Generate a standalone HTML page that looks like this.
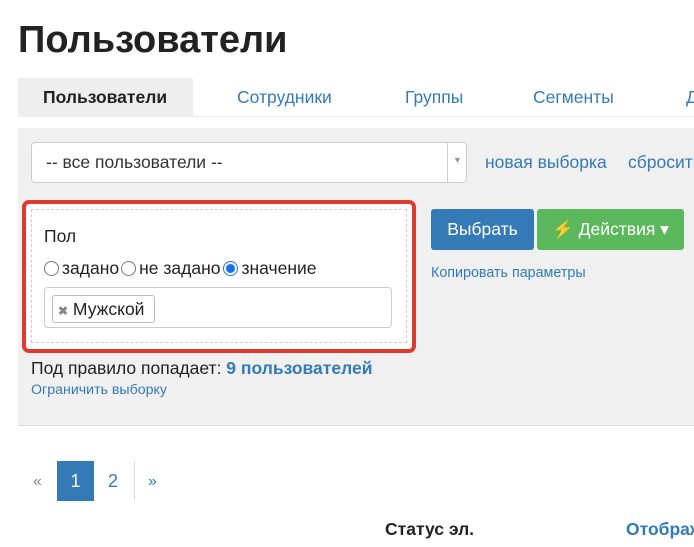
<!DOCTYPE html><html><head><meta charset="utf-8"><style>
*{box-sizing:border-box;margin:0;padding:0}
body{width:694px;height:547px;overflow:hidden;background:#fff;font-family:"Liberation Sans",sans-serif;color:#222;position:relative}
.a{position:absolute;white-space:nowrap}
.blue{color:#337ab7}
.r{width:15px;height:15px;border:1px solid #777;border-radius:50%;display:inline-block}
</style></head><body>
<div class="a" style="left:18px;top:19px;font-size:38px;font-weight:bold;color:#222">Пользователи</div>
<div class="a" style="left:18px;top:78px;width:175px;height:38px;background:#eee"></div>
<div class="a" style="left:18px;top:116px;width:676px;height:1px;background:#eee"></div>
<div class="a" style="left:43px;top:87px;font-size:17.5px;font-weight:bold">Пользователи</div>
<div class="a blue" style="left:237px;top:87px;font-size:17.5px">Сотрудники</div>
<div class="a blue" style="left:405px;top:87px;font-size:17.5px">Группы</div>
<div class="a blue" style="left:533px;top:87px;font-size:17.5px">Сегменты</div>
<div class="a blue" style="left:686px;top:87px;font-size:17.5px">Д</div>

<div class="a" style="left:18px;top:128px;width:676px;height:298px;background:#f0f0f0;border-bottom:1px solid #ddd"></div>
<div class="a" style="left:31px;top:142px;width:436px;height:41px;background:#fff;border:1px solid #ccc;border-radius:4px"></div>
<div class="a" style="left:447px;top:143px;width:1px;height:39px;background:#ccc"></div>
<div class="a" style="left:453px;top:155px;font-size:9px;color:#999">▼</div>
<div class="a" style="left:46px;top:152px;font-size:17.5px;color:#333">-- все пользователи --</div>
<div class="a blue" style="left:485px;top:152px;font-size:17.5px">новая выборка</div>
<div class="a blue" style="left:628px;top:152px;font-size:17.5px">сбросить</div>

<div class="a" style="left:22px;top:200px;width:394px;height:153px;border:4px solid #e03a2f;border-radius:7px;background:#fff"></div>
<div class="a" style="left:31px;top:209px;width:376px;height:134px;border:1px dashed #ccc"></div>
<div class="a" style="left:44px;top:226px;font-size:17.5px">Пол</div>
<div class="a" style="left:44px;top:258px;font-size:17.5px;display:flex;align-items:center">
<span class="r" style="margin-right:3px"></span>задано<span class="r" style="margin:0 3px 0 2px"></span>не задано<span class="r" style="margin:0 3px 0 3px;border-color:#1a73e8;background:radial-gradient(circle,#1a73e8 4px,#fff 5px)"></span>значение</div>
<div class="a" style="left:44px;top:287px;width:348px;height:41px;border:1px solid #ccc;border-radius:4px;background:#fff"></div>
<div class="a" style="left:52px;top:295px;width:103px;height:28px;border:1px solid #bbb;border-radius:3px;background:#fff;font-size:17.5px;padding:3px 0 0 5px"><span style="color:#888;font-size:12px;font-weight:bold">✖</span> Мужской</div>

<div class="a" style="left:431px;top:209px;width:103px;height:41px;background:#337ab7;border-radius:3px;color:#fff;font-size:17.5px;text-align:center;line-height:41px">Выбрать</div>
<div class="a" style="left:537px;top:209px;width:147px;height:41px;background:#5cb85c;border-radius:3px;color:#fff;font-size:17.5px;text-align:center;line-height:41px">⚡ Действия ▾</div>
<div class="a blue" style="left:431px;top:265px;font-size:14.3px">Копировать параметры</div>

<div class="a" style="left:31px;top:358px;font-size:17.5px">Под правило попадает: <b class="blue">9 пользователей</b></div>
<div class="a blue" style="left:31px;top:382px;font-size:14.2px">Ограничить выборку</div>

<div class="a" style="left:33px;top:473px;font-size:16px;color:#888">«</div>
<div class="a" style="left:57px;top:461px;width:37px;height:40px;background:#337ab7;color:#fff;font-size:18px;text-align:center;line-height:40px">1</div>
<div class="a blue" style="left:108px;top:471px;font-size:18px">2</div>
<div class="a" style="left:134px;top:461px;width:1px;height:40px;background:#ddd"></div>
<div class="a blue" style="left:148px;top:473px;font-size:16px">»</div>
<div class="a" style="left:385px;top:519px;font-size:17.5px;font-weight:bold">Статус эл.</div>
<div class="a blue" style="left:626px;top:519px;font-size:17.5px;font-weight:bold">Отображ</div>
</body></html>
